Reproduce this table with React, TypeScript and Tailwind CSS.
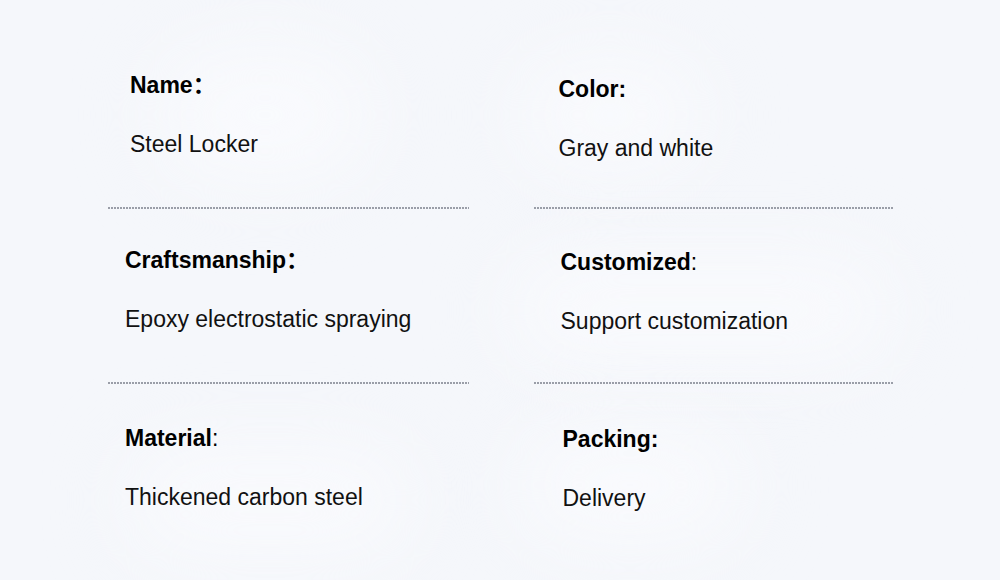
type Item = { label: string; colon: string; colonBold: boolean; value: string; cls: string };

const rows: { cls: string; items: Item[]; divider: boolean }[] = [
  {
    cls: "mt-0",
    divider: true,
    items: [
      { label: "Name", colon: "：", colonBold: true, value: "Steel Locker", cls: "pl-[22px] pt-0 pb-[4px]" },
      { label: "Color", colon: ":", colonBold: true, value: "Gray and white", cls: "pl-[25px] pt-[4px] pb-0" },
    ],
  },
  {
    cls: "mt-[39px]",
    divider: true,
    items: [
      { label: "Craftsmanship", colon: "：", colonBold: true, value: "Epoxy electrostatic spraying", cls: "pl-[17px] pt-0 pb-[4px]" },
      { label: "Customized", colon: ":", colonBold: false, value: "Support customization", cls: "pl-[27px] pt-[2px] pb-[2px]" },
    ],
  },
  {
    cls: "mt-[42px]",
    divider: false,
    items: [
      { label: "Material", colon: ":", colonBold: false, value: "Thickened carbon steel", cls: "pl-[17px] pt-0 pb-[4px]" },
      { label: "Packing", colon: ":", colonBold: true, value: "Delivery", cls: "pl-[29px] pt-[1px] pb-[3px]" },
    ],
  },
];

function Cell({ c }: { c: Item }) {
  return (
    <div className={`${c.cls} flex flex-col gap-[35px]`}>
      <p className="text-[23px] leading-[24px] font-bold text-black">
        {c.label}
        <span className={c.colonBold ? "font-bold" : "font-normal"}>{c.colon}</span>
      </p>
      <p className="text-[23px] leading-[24px] text-[#111]">{c.value}</p>
    </div>
  );
}

function Dots() {
  return <div className="h-[2px] bg-[repeating-linear-gradient(90deg,#9a9ea8_0_2px,transparent_2px_3px)]" />;
}

export default function App() {
  return (
    <div
      className="relative w-[1000px] h-[580px] overflow-hidden bg-[#f5f7fb]"
      style={{ fontFamily: '"Liberation Sans", Arial, "Noto Sans CJK SC", sans-serif' }}
    >
      {/* faint background blobs */}
      <div className="absolute left-[160px] top-[50px] w-[210px] h-[130px] rounded-full bg-[#f9fafd] blur-2xl" />
      <div className="absolute left-[520px] top-[60px] w-[180px] h-[110px] rounded-full bg-[#f9fafd] blur-2xl" />
      <div className="absolute left-[510px] top-[260px] w-[380px] h-[100px] rounded-full bg-[#f9fafd] blur-2xl" />
      <div className="absolute left-[130px] top-[450px] w-[280px] h-[100px] rounded-full bg-[#f9fafd] blur-2xl" />
      <div className="absolute left-[520px] top-[430px] w-[220px] h-[110px] rounded-full bg-[#f9fafd] blur-2xl" />

      <div className="relative ml-[108px] mt-[73px] w-[786px] flex flex-col">
        {rows.map((r, i) => (
          <div key={i} className={`${r.cls} flex flex-col`}>
            <div className="grid grid-cols-2 gap-x-[65px]">
              {r.items.map((c) => (
                <Cell key={c.label} c={c} />
              ))}
            </div>
            {r.divider && (
              <div className="mt-[47px] grid grid-cols-2 gap-x-[65px]">
                <Dots />
                <Dots />
              </div>
            )}
          </div>
        ))}
      </div>
    </div>
  );
}
